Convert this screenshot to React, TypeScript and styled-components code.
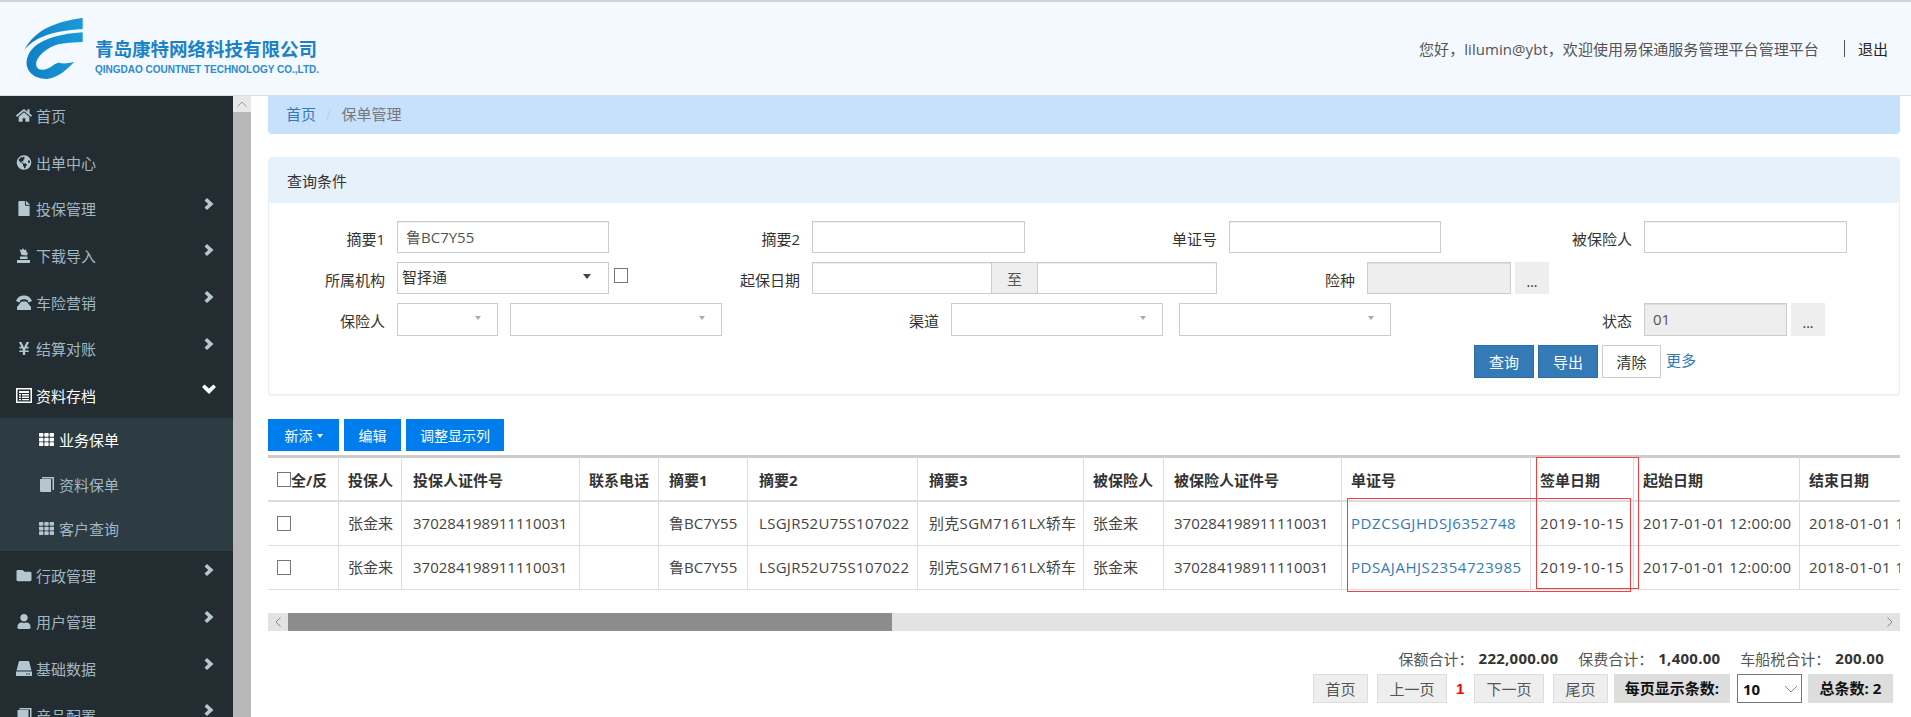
import React from "react";
import styled, { createGlobalStyle } from "styled-components";
import { FaHome, FaGlobeAmericas, FaFile, FaYenSign, FaFolder, FaUser, FaTh } from "react-icons/fa";

const Global = createGlobalStyle`
  html, body { margin: 0; padding: 0; background: #fff; }
  body { font-family: "Open Sans", "Noto Sans CJK SC", sans-serif; font-size: 15px; color: #333; }
  * { box-sizing: border-box; }
`;

const Page = styled.div`
  width: 1911px; height: 717px; overflow: hidden; display: flex; flex-direction: column;
`;
const Header = styled.header`
  height: 96px; flex: none; display: flex; align-items: center; padding: 0 23px 0 15px;
  background: #f4f8ff; border-top: 2px solid #d2d2d2; border-bottom: 1px solid #dcdcdc;
`;
const LogoMark = styled.svg`
  width: 80px; height: 80px; flex: none; margin-top: 1px;
`;
const Brand = styled.div`
  display: flex; flex-direction: column; margin-top: 16px;
`;
const BrandCn = styled.div`
  font-size: 18.5px; line-height: 23px; font-weight: 700; color: #1b82c8; white-space: nowrap;
`;
const BrandEn = styled.div`
  font-family: "Liberation Sans", sans-serif; font-size: 10px; line-height: 14px; font-weight: 700;
  color: #2a8ccf; white-space: nowrap; margin-top: 3px;
`;
const UserInfo = styled.div`
  margin-left: auto; display: flex; align-items: center; line-height: 20px; color: #555; white-space: nowrap; letter-spacing: .06px;
`;
const Divider = styled.span`
  width: 1px; height: 17px; background: #555; margin: 0 13px 0 25px;
`;
const Logout = styled.a`
  color: #222;
`;

const Body = styled.div`
  flex: 1; min-height: 0; display: flex;
`;
const Sidebar = styled.nav`
  width: 233px; flex: none; background: #222c31; overflow: hidden;
`;
const Menu = styled.div`
  margin-top: -4px;
`;
const MenuItem = styled.div<{ $active?: boolean }>`
  height: 46.7px; display: flex; align-items: center; padding: 0 19px 0 16px; gap: 4px;
  color: ${(p) => (p.$active ? "#fff" : "#a3b7c3")};
  svg.ico { color: ${(p) => (p.$active ? "#fff" : "#b4c6d0")}; width: 16px; height: 15px; flex: none; }
`;
const Chevron = styled.svg`
  margin-left: auto; width: 10px; height: 12px; margin-bottom: 10px; fill: #b4c6d0; flex: none;
`;
const OpenChevron = styled.svg`
  margin-left: auto; margin-right: -2px; width: 14px; height: 10px; margin-bottom: 12px; fill: #fff; flex: none;
`;
const SubMenu = styled.div`
  background: #2d3b43; margin-top: -1px; margin-bottom: 1px; height: 133px; display: flex; flex-direction: column;
`;
const SubItem = styled.div<{ $active?: boolean }>`
  height: 44.5px; display: flex; align-items: center; padding-left: 39px; gap: 5px;
  color: ${(p) => (p.$active ? "#fff" : "#a3b7c3")};
  svg { width: 15px; height: 15px; color: ${(p) => (p.$active ? "#fff" : "#b4c6d0")}; }
`;
const SideScroll = styled.div`
  width: 18px; flex: none; background: #b8b8b8; display: flex; flex-direction: column;
`;
const ScrollUp = styled.div`
  height: 16px; background: #e8e8e8; display: flex; align-items: center; justify-content: center;
`;

const Content = styled.main`
  flex: 1; min-width: 0; padding: 0 11px 0 17px; overflow: hidden;
`;
const Breadcrumb = styled.div`
  height: 38px; background: #c7e1fd; border-radius: 0 0 4px 4px; display: flex; align-items: center; padding: 0 0 3px 18px;
`;
const Crumb = styled.a`
  color: #337ab7;
`;
const Slash = styled.span`
  color: #ccc; margin: 0 10px;
`;
const CrumbNow = styled.span`
  color: #777;
`;
const Panel = styled.section`
  margin-top: 23px; height: 238px; background: #fff; border: 1px solid #e6f1fc; border-top: 0; border-radius: 4px;
  box-shadow: 0 1px 1px rgba(0,0,0,.05); display: flex; flex-direction: column; overflow: hidden;
`;
const PanelHead = styled.div`
  height: 46px; flex: none; background: #e6f1fc; padding-left: 18px; display: flex; align-items: center; color: #333;
`;
const Form = styled.div`
  padding-top: 18px; display: flex; flex-direction: column; gap: 9px;
`;
const Row = styled.div<{ $h: number }>`
  display: flex; align-items: stretch; height: ${(p) => p.$h}px;
`;
const Label = styled.label<{ $w: number }>`
  width: ${(p) => p.$w}px; margin-right: 12px; flex: none; text-align: right; line-height: 20px; padding-top: 8px; color: #333; white-space: nowrap;
`;
const TextInput = styled.input<{ $w: number; $disabled?: boolean }>`
  width: ${(p) => p.$w}px; height: 100%; flex: none; border: 1px solid #ccc; padding: 0 8px 2px; font: inherit; color: #555; outline: 0;
  background: ${(p) => (p.$disabled ? "#eee" : "#fff")};
  box-shadow: inset 0 1px 1px rgba(0,0,0,.075);
`;
const Addon = styled.span`
  width: 45px; flex: none; background: #eee; border: solid #ccc; border-width: 1px 0; display: flex; align-items: center; justify-content: center; color: #555;
`;
const Dots = styled.button`
  width: 34px; flex: none; margin-left: 4px; border: 0; background: #eee; color: #333; font: inherit; font-size: 14px; padding: 6px 0 0;
`;
const Select = styled.div<{ $w: number; $gap?: number }>`
  width: ${(p) => p.$w}px; margin-left: ${(p) => p.$gap ?? 0}px; flex: none; border: 1px solid #ccc; background: #fff; display: flex; align-items: center; padding: 0 4px 3px; color: #333;
`;
const Caret = styled.span<{ $dark?: boolean }>`
  margin-left: auto; width: 0; height: 0; border-style: solid;
  border-width: ${(p) => (p.$dark ? "5px 4px 0" : "4px 3px 0")};
  border-color: ${(p) => (p.$dark ? "#444" : "#aaa")} transparent transparent;
  margin-right: ${(p) => (p.$dark ? "13px" : "12px")};
`;
const Box = styled.input.attrs({ type: "checkbox" })`
  appearance: none; width: 14px; height: 15px; margin: 0; flex: none; border: 1px solid #777; background: #fff;
`;
const SideBox = styled(Box)`
  margin: 6px 0 0 5px;
`;
const ActionRow = styled(Row)`
  padding-left: 1205px; gap: 4px;
`;
const SolidBtn = styled.button`
  width: 60px; border: 1px solid #2e6da4; background: #337ab7; color: #fff; font: inherit; padding: 0;
`;
const PlainBtn = styled.button`
  width: 59px; border: 1px solid #ccc; background: #fff; color: #333; font: inherit; padding: 0;
`;
const More = styled.a`
  color: #337ab7; line-height: 20px; padding-top: 5px; margin-left: 1px;
`;

const Toolbar = styled.div`
  margin-top: 24px; height: 32px; display: flex; gap: 5px;
`;
const ToolBtn = styled.button<{ $w: number }>`
  width: ${(p) => p.$w}px; border: 0; background: #007dec; color: #fff; font: inherit; font-size: 14px; padding: 0; display: flex; align-items: center; justify-content: center; gap: 4px;
`;
const ToolCaret = styled.span`
  width: 0; height: 0; border-style: solid; border-width: 4px 3px 0; border-color: #fff transparent transparent; margin-top: 2px;
`;

const TableWrap = styled.div`
  margin-top: 4px; position: relative; overflow: hidden; height: 137px;
`;
const Table = styled.table`
  border-collapse: separate; border-spacing: 0; table-layout: fixed; width: 1692px;
`;
const wideCols = `
  &:nth-child(3), &:nth-child(6), &:nth-child(7) { padding-left: 11px; }
  &:nth-child(5), &:nth-child(9) { padding-left: 10px; }
`;
const Th = styled.th`
  padding: 0 0 0 9px; text-align: left; font-weight: 700; font-size: 15px; color: #333; white-space: nowrap;
  border-top: 3px solid #ccc; border-bottom: 2px solid #ddd; border-right: 1px solid #ddd; height: 47px;
  ${wideCols}
`;
const Td = styled.td`
  height: 44px; padding: 0 0 2px 9px; white-space: nowrap; color: #444; border-bottom: 1px solid #ddd; border-right: 1px solid #ddd; overflow: visible;
  &:first-child { padding-bottom: 0; }
  ${wideCols}
`;
const Spaced = styled.span<{ $ls: number }>`
  letter-spacing: ${(p) => p.$ls}px;
`;
const HeadCheck = styled.span`
  display: flex; align-items: center;
`;
const Link = styled.a`
  color: #337ab7; letter-spacing: .55px;
`;
const RedBox = styled.div<{ $l: number; $t: number; $w: number; $h: number }>`
  position: absolute; left: ${(p) => p.$l}px; top: ${(p) => p.$t}px; width: ${(p) => p.$w}px; height: ${(p) => p.$h}px;
  border: 1px solid #f24040; pointer-events: none;
`;
const HScroll = styled.div`
  margin-top: 21px; height: 18px; background: #e3e3e3; display: flex; align-items: center;
`;
const HBtn = styled.div`
  width: 20px; height: 100%; flex: none; display: flex; align-items: center; justify-content: center;
`;
const HThumb = styled.div`
  width: 604px; height: 100%; background: #8c8c8c;
`;
const HBtnEnd = styled(HBtn)`
  margin-left: auto;
`;
const Totals = styled.div`
  margin-top: 15px; height: 24px; display: flex; justify-content: flex-end; align-items: center; padding-right: 16px; color: #555;
`;
const TotalValue = styled.b`
  color: #333; margin: 0 20px 0 5px; letter-spacing: .25px;
  &:last-child { margin-right: 0; }
`;
const Pager = styled.div`
  margin-top: 4px; height: 29px; display: flex; justify-content: flex-end; padding-right: 7px;
`;
const PageBtn = styled.button<{ $w: number; $gap?: number }>`
  width: ${(p) => p.$w}px; margin-left: ${(p) => p.$gap ?? 9}px; border: 1px solid #ddd; background: #eee; color: #555; font: inherit; padding: 0;
`;
const PageNum = styled.b`
  width: 8px; margin-left: 9px; color: #f00; line-height: 29px; font-family: "Liberation Sans", sans-serif;
`;
const InfoTag = styled.b<{ $w: number; $gap: number }>`
  width: ${(p) => p.$w}px; margin-left: ${(p) => p.$gap}px; background: #ddd; color: #111; text-align: center; line-height: 29px; white-space: nowrap;
`;
const SizeSelect = styled.div`
  width: 65px; margin-left: 7px; border: 1px solid #777; display: flex; align-items: center; padding-left: 5px; font-weight: 700; color: #111;
`;
const SizeArrow = styled.svg`
  margin-left: auto; margin-right: 3px;
`;

const Tower = () => (
  <svg className="ico" viewBox="0 0 16 15" fill="currentColor">
    <path d="M1 12h13v3H1zM4 8.500h7.500V11H4zM5.500 7 3.500 1l2 1.200L7 0l1 2 2.200-.5.300 3L12 4.500 11 7.500z" />
  </svg>
);
const Phone = () => (
  <svg className="ico" viewBox="0 0 16 15" fill="currentColor">
    <path d="M0 6C2 1.500 5 .5 8 .5S14 1.500 16 6l-3.500 1.500L11.500 5c-2-1-5-1-7 0l-1 2.500z" />
    <path d="M5.500 6.500h5L15 12v3H1v-3z" />
  </svg>
);
const ListAlt = () => (
  <svg className="ico" viewBox="0 0 16 15" fill="currentColor">
    <path fillRule="evenodd" d="M0 0h16v15H0zM1.500 1.500v12h13v-12z" />
    <path d="M3 3h10v2H3zM3 6h2v1.500H3zM6 6h7v1.500H6zM3 8.500h2V10H3zM6 8.500h7V10H6zM3 11h2v1.200H3zM6 11h7v1.200H6z" />
  </svg>
);
const Hdd = () => (
  <svg className="ico" viewBox="0 0 16 15" fill="currentColor">
    <path d="M3 0h10l2.500 9.500H.5z" />
    <path fillRule="evenodd" d="M0 10.500h16V15H0zM10 12.500v1h1.500v-1zM12.500 12.500v1H14v-1z" />
  </svg>
);
const Book = ({ className }: { className?: string }) => (
  <svg className={className} viewBox="0 0 15 15" fill="currentColor">
    <path d="M3 0h12v13h-1.500V1.500H3z" />
    <path d="M1 2h11v13H2.500C1.500 15 1 14.500 1 13.500z" />
  </svg>
);
const Right = () => (
  <Chevron viewBox="0 0 10 12"><path d="M3 0l6.500 6L3 12 .5 9.500 4.200 6 .5 2.500z" /></Chevron>
);

const cols = [71, 63, 178, 79, 89, 170, 166, 80, 178, 189, 103, 166, 160];
const heads = ["投保人", "投保人证件号", "联系电话", "摘要1", "摘要2", "摘要3", "被保险人", "被保险人证件号", "单证号", "签单日期", "起始日期", "结束日期"];
const rows = ["PDZCSGJHDSJ6352748", "PDSAJAHJS2354723985"];

export default function App() {
  return (
    <Page>
      <Global />
      <Header>
        <LogoMark viewBox="0 0 80 80">
          <defs>
            <linearGradient id="lg" x1="0" y1="0" x2="1" y2="0">
              <stop offset="0" stopColor="#0f7fc6" />
              <stop offset="1" stopColor="#1b9ad8" />
            </linearGradient>
          </defs>
          <path fill="url(#lg)" d="M67.700 9C45 12 20 19 9.500 41 18 30 34 22 67.700 20z" />
          <path fill="url(#lg)" d="M67.700 23.300C40 25 18 33 13 47 8 58 16 70 32 70 42 69 52 61 59.300 52.700 53 54.500 47 55 44 53.500L40 55C34 60 28 62 23.500 60 18 55 22 46 36 38 44 34 55 33.500 67.700 33z" />
        </LogoMark>
        <Brand>
          <BrandCn>青岛康特网络科技有限公司</BrandCn>
          <BrandEn>QINGDAO COUNTNET TECHNOLOGY CO.,LTD.</BrandEn>
        </Brand>
        <UserInfo>
          您好，lilumin@ybt，欢迎使用易保通服务管理平台管理平台
          <Divider />
          <Logout>退出</Logout>
        </UserInfo>
      </Header>
      <Body>
        <Sidebar>
          <Menu>
            <MenuItem><FaHome className="ico" />首页</MenuItem>
            <MenuItem><FaGlobeAmericas className="ico" />出单中心</MenuItem>
            <MenuItem><FaFile className="ico" />投保管理<Right /></MenuItem>
            <MenuItem><Tower />下载导入<Right /></MenuItem>
            <MenuItem><Phone />车险营销<Right /></MenuItem>
            <MenuItem><FaYenSign className="ico" />结算对账<Right /></MenuItem>
            <MenuItem $active><ListAlt />资料存档<OpenChevron viewBox="0 0 14 10"><path d="M0 3l2.500-2.500L7 4.500 11.500.5 14 3 7 10z" /></OpenChevron></MenuItem>
            <SubMenu>
              <SubItem $active><FaTh />业务保单</SubItem>
              <SubItem><Book />资料保单</SubItem>
              <SubItem><FaTh />客户查询</SubItem>
            </SubMenu>
            <MenuItem><FaFolder className="ico" />行政管理<Right /></MenuItem>
            <MenuItem><FaUser className="ico" />用户管理<Right /></MenuItem>
            <MenuItem><Hdd />基础数据<Right /></MenuItem>
            <MenuItem><Book className="ico" />产品配置<Right /></MenuItem>
          </Menu>
        </Sidebar>
        <SideScroll>
          <ScrollUp>
            <svg width="10" height="6" viewBox="0 0 10 6"><path d="M.5 5.500 5 1l4.500 4.500" fill="none" stroke="#999" /></svg>
          </ScrollUp>
        </SideScroll>
        <Content>
          <Breadcrumb>
            <Crumb>首页</Crumb><Slash>/</Slash><CrumbNow>保单管理</CrumbNow>
          </Breadcrumb>
          <Panel>
            <PanelHead>查询条件</PanelHead>
            <Form>
              <Row $h={32}>
                <Label $w={116}>摘要1</Label><TextInput $w={212} defaultValue="鲁BC7Y55" />
                <Label $w={191}>摘要2</Label><TextInput $w={213} />
                <Label $w={192}>单证号</Label><TextInput $w={212} />
                <Label $w={191}>被保险人</Label><TextInput $w={203} />
              </Row>
              <Row $h={32}>
                <Label $w={116}>所属机构</Label>
                <Select $w={212}>智择通<Caret $dark /></Select>
                <SideBox />
                <Label $w={172}>起保日期</Label>
                <TextInput $w={180} /><Addon>至</Addon><TextInput $w={180} />
                <Label $w={138}>险种</Label>
                <TextInput $w={144} $disabled disabled /><Dots>...</Dots>
              </Row>
              <Row $h={33}>
                <Label $w={116}>保险人</Label>
                <Select $w={101}><Caret /></Select>
                <Select $w={212} $gap={12}><Caret /></Select>
                <Label $w={217}>渠道</Label>
                <Select $w={212}><Caret /></Select>
                <Select $w={212} $gap={16}><Caret /></Select>
                <Label $w={241}>状态</Label>
                <TextInput $w={143} $disabled disabled defaultValue="01" /><Dots>...</Dots>
              </Row>
              <ActionRow $h={33}>
                <SolidBtn>查询</SolidBtn>
                <SolidBtn>导出</SolidBtn>
                <PlainBtn>清除</PlainBtn>
                <More>更多</More>
              </ActionRow>
            </Form>
          </Panel>
          <Toolbar>
            <ToolBtn $w={71}>新添<ToolCaret /></ToolBtn>
            <ToolBtn $w={57}>编辑</ToolBtn>
            <ToolBtn $w={98}>调整显示列</ToolBtn>
          </Toolbar>
          <TableWrap>
            <Table>
              <colgroup>{cols.map((w, i) => <col key={i} width={w} />)}</colgroup>
              <thead>
                <tr>
                  <Th><HeadCheck><Box />全/反</HeadCheck></Th>
                  {heads.map((h) => <Th key={h}>{h}</Th>)}
                </tr>
              </thead>
              <tbody>
                {rows.map((no) => (
                  <tr key={no}>
                    <Td><HeadCheck><Box /></HeadCheck></Td>
                    <Td>张金来</Td>
                    <Td>370284198911110031</Td>
                    <Td></Td>
                    <Td>鲁BC7Y55</Td>
                    <Td><Spaced $ls={.3}>LSGJR52U75S107022</Spaced></Td>
                    <Td><Spaced $ls={.3}>别克SGM7161LX轿车</Spaced></Td>
                    <Td>张金来</Td>
                    <Td>370284198911110031</Td>
                    <Td><Link>{no}</Link></Td>
                    <Td><Spaced $ls={.6}>2019-10-15</Spaced></Td>
                    <Td><Spaced $ls={.37}>2017-01-01 12:00:00</Spaced></Td>
                    <Td><Spaced $ls={.37}>2018-01-01 12:00:00</Spaced></Td>
                  </tr>
                ))}
              </tbody>
            </Table>
            <RedBox $l={1079} $t={43} $w={284} $h={94} />
            <RedBox $l={1268} $t={2} $w={103} $h={132} />
          </TableWrap>
          <HScroll>
            <HBtn><svg width="6" height="10" viewBox="0 0 6 10"><path d="M5.500.5 1 5l4.500 4.500" fill="none" stroke="#888" /></svg></HBtn>
            <HThumb />
            <HBtnEnd><svg width="6" height="10" viewBox="0 0 6 10"><path d="M.5.5 5 5 .5 9.500" fill="none" stroke="#888" /></svg></HBtnEnd>
          </HScroll>
          <Totals>
            保额合计：<TotalValue>222,000.00</TotalValue>
            保费合计：<TotalValue>1,400.00</TotalValue>
            车船税合计：<TotalValue>200.00</TotalValue>
          </Totals>
          <Pager>
            <PageBtn $w={55}>首页</PageBtn>
            <PageBtn $w={70}>上一页</PageBtn>
            <PageNum>1</PageNum>
            <PageBtn $w={70} $gap={10}>下一页</PageBtn>
            <PageBtn $w={55}>尾页</PageBtn>
            <InfoTag $w={116} $gap={6}>每页显示条数:</InfoTag>
            <SizeSelect>10<SizeArrow width="14" height="8" viewBox="0 0 14 8"><path d="M1 1l6 6 6-6" fill="none" stroke="#888" /></SizeArrow></SizeSelect>
            <InfoTag $w={85} $gap={6}>总条数: 2</InfoTag>
          </Pager>
        </Content>
      </Body>
    </Page>
  );
}
